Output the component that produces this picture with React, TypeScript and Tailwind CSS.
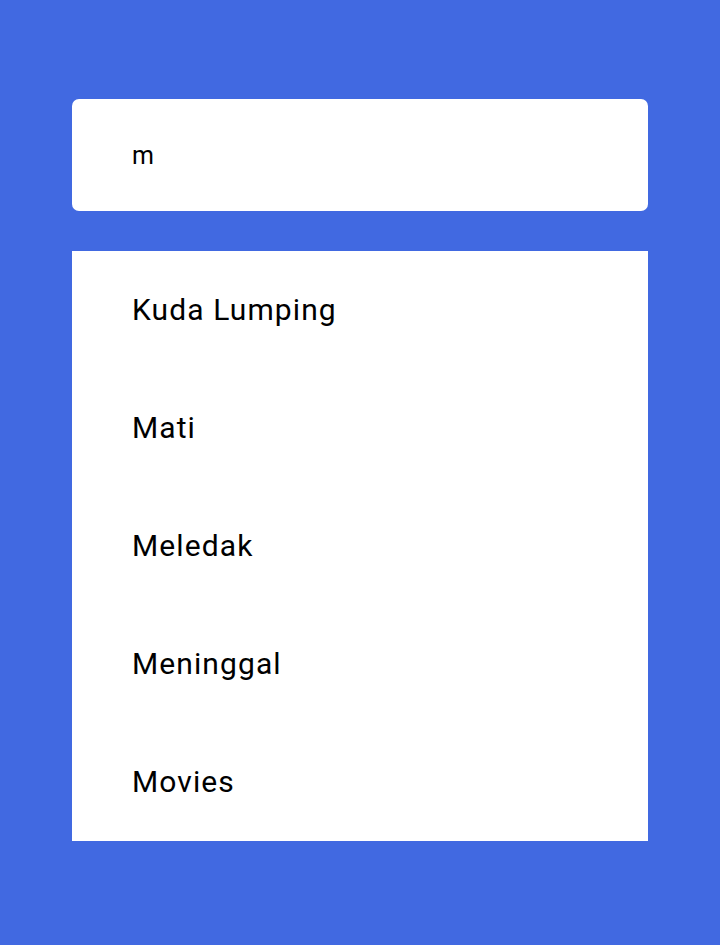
const items = ["Kuda Lumping", "Mati", "Meledak", "Meninggal", "Movies"];

export default function App() {
  return (
    <div className="min-h-[945px] w-full bg-[#4169e1] px-[72px] pt-[99px] font-['Roboto',sans-serif] text-black">
      {/* search box */}
      <div className="flex h-[112px] items-center rounded-[7px] bg-white pl-[60px]">
        <span className="text-[25px] leading-none tracking-[0.3px]">m</span>
      </div>

      {/* results */}
      <div className="mt-[40px] bg-white">
        {items.map((item) => (
          <div key={item} className="flex h-[118px] items-center pl-[60px]">
            <span className="text-[30px] leading-none tracking-[1.1px]">{item}</span>
          </div>
        ))}
      </div>
    </div>
  );
}
